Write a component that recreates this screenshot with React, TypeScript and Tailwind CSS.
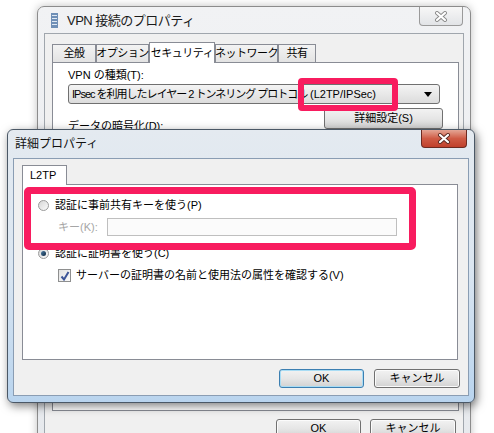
import React from 'react';

/**
 * Two stacked Windows 7 dialogs: "VPN 接続のプロパティ" behind,
 * "詳細プロパティ" (L2TP) in front, with pink highlight marks.
 */

const CloseGlyph: React.FC<{ active?: boolean }> = ({ active }) => (
  <svg width="14" height="11" viewBox="0 0 14 11">
    <path d="M3 2 L11 9 M11 2 L3 9" stroke={active ? '#5a2a22' : '#8a8a8a'} strokeWidth="4" strokeLinecap="round" />
    <path d="M3 2 L11 9 M11 2 L3 9" stroke="#ffffff" strokeWidth="2.2" strokeLinecap="round" />
  </svg>
);

const Btn: React.FC<{ label: string; w: string; focused?: boolean }> = ({ label, w, focused }) => (
  <button
    className={`${w} h-[19px] rounded-[3px] border ${
      focused ? 'border-[#3c7fb1] shadow-[inset_0_0_0_1px_#a8dcf4]' : 'border-[#707070] shadow-[inset_0_0_0_1px_#fbfbfb]'
    } bg-gradient-to-b from-[#f2f2f2] via-[#e6e6e6] to-[#d2d2d2] flex items-center justify-center text-[11px] leading-none`}
  >
    {label}
  </button>
);

const Radio: React.FC<{ checked?: boolean }> = ({ checked }) => (
  <div className="w-[11px] h-[11px] rounded-full border border-[#9a9a9a] bg-gradient-to-br from-[#d6d6d6] to-[#fbfbfb] flex items-center justify-center shrink-0">
    {checked && <div className="w-[5px] h-[5px] rounded-full bg-gradient-to-br from-[#4f7fa8] to-[#0d2740]" />}
  </div>
);

const Checkbox: React.FC = () => (
  <div className="w-[13px] h-[13px] border border-[#8e8f8f] bg-gradient-to-br from-[#e2e2e2] to-[#fafafa] flex items-center justify-center shrink-0">
    <svg width="10" height="10" viewBox="0 0 10 10">
      <path d="M1.5 5.5 L4 8.5 L8.5 1" stroke="#3d5598" strokeWidth="2" fill="none" />
    </svg>
  </div>
);

const tabs = [
  { t: '全般', w: 'w-[44px]' },
  { t: 'オプション', w: 'w-[53px]' },
  { t: 'セキュリティ', w: 'w-[66px]', sel: true },
  { t: 'ネットワーク', w: 'w-[63px]' },
  { t: '共有', w: 'w-[38px]' },
];

const App: React.FC = () => {
  return (
    <div className="relative w-[494px] h-[433px] overflow-hidden bg-white text-black text-[11px] font-['Liberation_Sans','Noto_Sans_CJK_JP',sans-serif]">
      {/* Back window: VPN 接続のプロパティ */}
      <div className="absolute left-[37px] top-[6px] w-[434px] h-[460px] rounded-t-[7px] border border-[#8c8c8c] bg-gradient-to-b from-[#f1f2f4] to-[#e6e9ed] px-[6px] shadow-[0_0_8px_rgba(0,0,0,0.25)]">
        <div className="h-[26px] flex">
          <div className="flex items-center self-center ml-[7px]">
            <svg width="7" height="15" viewBox="0 0 7 15">
              <rect x="0" y="0" width="7" height="15" fill="#6f8fb6" />
              <rect x="1" y="2" width="5" height="1" fill="#dfe8f3" />
              <rect x="1" y="5" width="5" height="1" fill="#dfe8f3" />
              <rect x="1" y="8" width="5" height="1" fill="#dfe8f3" />
              <rect x="1" y="11" width="5" height="1" fill="#dfe8f3" />
            </svg>
            <span className="ml-[9px] text-[13px] leading-none text-[#1a1a1a] tracking-[-0.5px]">VPN 接続のプロパティ</span>
          </div>
          <div className="ml-auto mr-[1px] w-[44px] h-[19px] rounded-b-[4px] border border-t-0 border-[#9a9a9a] bg-gradient-to-b from-[#f7f7f7] to-[#e2e4e7] flex items-center justify-center">
            <CloseGlyph />
          </div>
        </div>

        <div className="border border-[#a0a6ad] bg-[#f0f0f0] px-[7px] pt-[7px] h-[430px]">
          <div className="flex items-end h-[21px]">
            {tabs.map((tab) => (
              <div
                key={tab.t}
                className={`${tab.w} ${
                  tab.sel ? 'h-[21px] -mb-px relative z-10 bg-white' : 'h-[18px] bg-gradient-to-b from-[#f3f3f3] to-[#e3e3e3]'
                } border border-b-0 border-[#898c95] flex items-center justify-center leading-none whitespace-nowrap tracking-[-0.5px]`}
              >
                {tab.t}
              </div>
            ))}
          </div>

          <div className="w-[407px] h-[349px] border border-[#898c95] bg-white px-[15px] pt-[6px]">
            <div className="leading-[13px]">VPN の種類(T):</div>
            <div className="mt-[2px] w-[372px] h-[20px] rounded-[3px] border border-[#707070] bg-gradient-to-b from-[#f4f4f4] to-[#dcdcdc] flex items-center pl-[3px] pr-[7px]">
              <span className="w-[226px] leading-none whitespace-nowrap tracking-[-1px]">
                IPsec を利用したレイヤー 2 トンネリング プロトコル
              </span>
              <span className="ml-[12px] leading-none whitespace-nowrap">(L2TP/IPSec)</span>
              <svg className="ml-auto" width="8" height="5" viewBox="0 0 8 5">
                <path d="M0 0 H8 L4 5 Z" fill="#000" />
              </svg>
            </div>
            <div className="mt-[4px] flex items-start">
              <div className="mt-[12px] leading-[13px]">データの暗号化(D):</div>
              <div className="ml-auto w-[119px] h-[21px] rounded-[3px] border border-[#707070] bg-gradient-to-b from-[#f2f2f2] via-[#e6e6e6] to-[#d2d2d2] flex items-center justify-center leading-none">
                詳細設定(S)
              </div>
            </div>
          </div>

          <div className="mt-[8px] flex justify-end gap-[9px]">
            <Btn label="OK" w="w-[85px]" />
            <Btn label="キャンセル" w="w-[86px]" />
          </div>
        </div>
      </div>

      {/* highlight on the combo box */}
      <div className="absolute left-[298px] top-[78px] w-[100px] h-[33px] rounded-[4px] border-[6px] border-[#f81c5f]" />

      {/* Front dialog: 詳細プロパティ */}
      <div className="absolute left-[7px] top-[129px] w-[468px] h-[274px] rounded-[6px] border border-[#4b5866] bg-gradient-to-b from-[#e4eaf0] via-[#dbe6f1] to-[#b9d4ee] px-[5px] shadow-[2px_3px_10px_rgba(0,0,0,0.5)]">
        <div className="h-[28px] flex">
          <span className="self-center ml-[2px] text-[12px] leading-none text-[#111]">詳細プロパティ</span>
          <div className="ml-auto mr-[2px] w-[46px] h-[18px] rounded-b-[4px] border border-t-0 border-[#6d2a20] bg-gradient-to-b from-[#e3a595] via-[#cf5b45] to-[#c0402b] flex items-center justify-center">
            <CloseGlyph active />
          </div>
        </div>

        <div className="h-[238px] border border-[#8a9db3] bg-[#f0f0f0] pl-[8px] pt-[6px]">
          <div className="w-[45px] h-[20px] -mb-px relative z-10 bg-white border border-b-0 border-[#898c95] flex items-center pl-[7px] leading-none">
            L2TP
          </div>
          <div className="w-[436px] h-[176px] border border-[#898c95] bg-white pl-[15px] pt-[14px]">
            <div className="flex items-center h-[12px]">
              <Radio />
              <span className="ml-[6px] leading-none">認証に事前共有キーを使う(P)</span>
            </div>
            <div className="mt-[7px] flex items-center pl-[20px]">
              <span className="w-[49px] leading-none text-[#a6a6a6]">キー(K):</span>
              <div className="w-[290px] h-[18px] border border-[#bfbfbf] bg-[#fbfbfb]" />
            </div>
            <div className="mt-[11px] flex items-center h-[12px]">
              <Radio checked />
              <span className="ml-[6px] leading-none">認証に証明書を使う(C)</span>
            </div>
            <div className="mt-[10px] flex items-center pl-[20px]">
              <Checkbox />
              <span className="ml-[5px] leading-none">サーバーの証明書の名前と使用法の属性を確認する(V)</span>
            </div>
          </div>

          <div className="mt-[9px] flex justify-end gap-[10px] pr-[8px]">
            <Btn label="OK" w="w-[85px]" focused />
            <Btn label="キャンセル" w="w-[86px]" />
          </div>
        </div>
      </div>

      {/* highlight on the pre-shared key option */}
      <div className="absolute left-[24px] top-[187px] w-[392px] h-[63px] rounded-[5px] border-[7px] border-[#f81c5f]" />
    </div>
  );
};

export default App;
